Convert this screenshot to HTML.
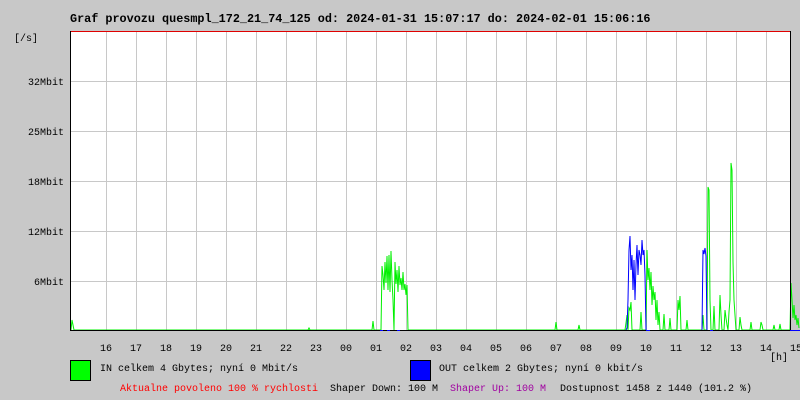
<!DOCTYPE html>
<html><head><style>
body{margin:0;background:#c8c8c8;}
svg{display:block}
text{font-family:"Liberation Mono","DejaVu Sans Mono",monospace;font-size:10px;fill:#000}
</style></head><body>
<svg width="800" height="400" viewBox="0 0 800 400" xmlns="http://www.w3.org/2000/svg">
<rect width="800" height="400" fill="#c8c8c8"/>
<rect x="70" y="31" width="720" height="299" fill="#fff"/>
<g stroke="#c8c8c8" stroke-width="1">
<path d="M106.5 31V330M136.5 31V330M166.5 31V330M196.5 31V330M226.5 31V330M256.5 31V330M286.5 31V330M316.5 31V330M346.5 31V330M376.5 31V330M406.5 31V330M436.5 31V330M466.5 31V330M496.5 31V330M526.5 31V330M556.5 31V330M586.5 31V330M616.5 31V330M646.5 31V330M676.5 31V330M706.5 31V330M736.5 31V330M766.5 31V330"/>
<path d="M70 81.5H790M70 131.5H790M70 181.5H790M70 231.5H790M70 281.5H790"/>
</g>
<g fill="none" stroke="#00f000" stroke-width="1">
<polyline points="71,330 72,320 73,325 74,330 308,330 309,328 310,330 372,330 373,321 374,330 381,330 382,266 383,275 384,290 385,262 386,283 387,256 388,290 389,255 390,292 391,251 392,280 393,300 394,330 395,262 396,284 397,270 398,292 399,266 400,285 401,278 402,290 403,272 404,290 405,284 406,295 407,285 408,330 555,330 556,322 557,330 578,330 579,325 580,330 625,330 626,323 627,315 628,330 629,308 630,310 631,302 632,330 640,330 641,312 642,330 646,330 647,250 648,280 649,268 650,290 651,272 652,305 653,286 654,300 655,292 656,320 657,300 658,325 659,312 660,330 663,330 664,314 665,330 669,330 670,318 671,330 677,330 678,300 679,310 680,296 681,330 686,330 687,320 688,330 702,330 703,315 704,330 707,330 708,187 709,190 710,300 711,330 713,330 714,306 715,330 719,330 720,295 721,315 722,330 724,330 725,310 726,318 727,325 728,330 729,312 730,300 731,163 732,170 733,262 734,300 735,315 736,330 739,330 740,317 741,325 742,330 750,330 751,322 752,330 760,330 761,322 762,325 763,330 773,330 774,325 775,330 779,330 780,324 781,330 790,330 791,283 792,300 793,318 794,305 795,320 796,315 797,325 798,318 799,328"/>
</g>
<g fill="none" stroke="#0000ff" stroke-width="1">
<polyline points="626,330 627,328 628,300 629,250 630,236 631,270 632,255 633,290 634,260 635,300 636,265 637,245 638,275 639,250 640,255 641,265 642,240 643,255 644,250 645,275 646,330"/>
<polyline points="702,330 703,250 704,254 705,248 706,256 707,330"/>
</g>
<line x1="70" y1="31.5" x2="790" y2="31.5" stroke="#e00000"/>
<line x1="70.5" y1="31" x2="70.5" y2="331" stroke="#000"/>
<line x1="70" y1="330.5" x2="800" y2="330.5" stroke="#000"/>
<line x1="790.5" y1="31" x2="790.5" y2="330" stroke="#000"/>
<g stroke="#0000ff" stroke-width="1">
<path d="M380 330.5h3M387 330.5h3M397 330.5h3M646 330.5h4M710 330.5h3M790 330.5h10"/>
</g>
<text x="70" y="22" style="font-size:11.8px;font-weight:bold">Graf provozu quesmpl_172_21_74_125 od: 2024-01-31 15:07:17 do: 2024-02-01 15:06:16</text>
<text x="14" y="41">[/s]</text>
<g text-anchor="end">
<text x="64" y="85">32Mbit</text>
<text x="64" y="135">25Mbit</text>
<text x="64" y="185">18Mbit</text>
<text x="64" y="235">12Mbit</text>
<text x="64" y="285">6Mbit</text>
</g>
<g text-anchor="middle">
<text x="106" y="351">16</text><text x="136" y="351">17</text><text x="166" y="351">18</text><text x="196" y="351">19</text><text x="226" y="351">20</text><text x="256" y="351">21</text><text x="286" y="351">22</text><text x="316" y="351">23</text><text x="346" y="351">00</text><text x="376" y="351">01</text><text x="406" y="351">02</text><text x="436" y="351">03</text><text x="466" y="351">04</text><text x="496" y="351">05</text><text x="526" y="351">06</text><text x="556" y="351">07</text><text x="586" y="351">08</text><text x="616" y="351">09</text><text x="646" y="351">10</text><text x="676" y="351">11</text><text x="706" y="351">12</text><text x="736" y="351">13</text><text x="766" y="351">14</text><text x="796" y="351">15</text>
</g>
<text x="770" y="360">[h]</text>
<rect x="70.5" y="360.5" width="20" height="20" fill="#00ff00" stroke="#000"/>
<text x="100" y="371">IN celkem 4 Gbytes; nyní 0 Mbit/s</text>
<rect x="410.5" y="360.5" width="20" height="20" fill="#0000ff" stroke="#000"/>
<text x="439" y="371">OUT celkem 2 Gbytes; nyní 0 kbit/s</text>
<text x="120" y="391" style="fill:#ff0000">Aktualne povoleno 100 % rychlosti</text>
<text x="330" y="391">Shaper Down: 100 M</text>
<text x="450" y="391" style="fill:#a000a0">Shaper Up: 100 M</text>
<text x="560" y="391">Dostupnost 1458 z 1440 (101.2 %)</text>
</svg>
</body></html>
